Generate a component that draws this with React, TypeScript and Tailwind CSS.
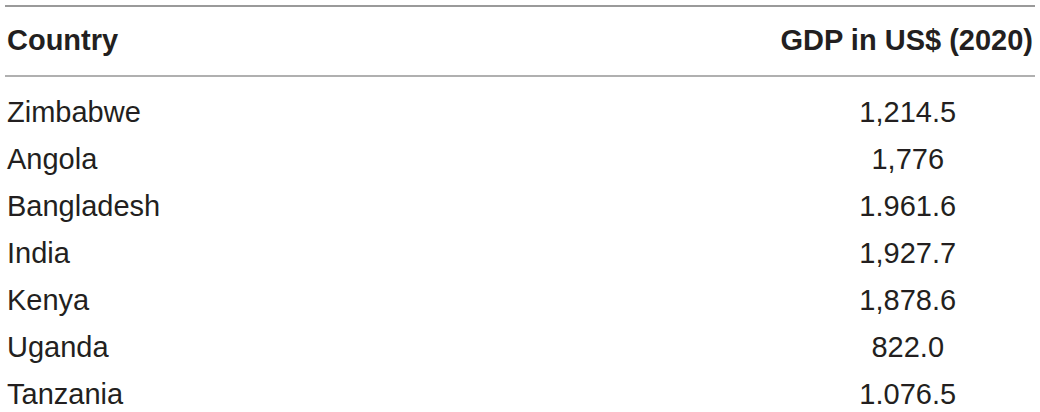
import { Fragment } from "react";

const rows = [
  ["Zimbabwe", "1,214.5"],
  ["Angola", "1,776"],
  ["Bangladesh", "1.961.6"],
  ["India", "1,927.7"],
  ["Kenya", "1,878.6"],
  ["Uganda", "822.0"],
  ["Tanzania", "1.076.5"],
];

const App = () => {
  return (
    <div className="w-[1040px] h-[412px] bg-white px-[5px] pt-[5px] overflow-hidden font-['Liberation_Sans',Arial,sans-serif] text-[29px] text-[#231f20]">
      <div className="grid grid-cols-[1fr_auto] border-t-2 border-[#9a9a9a]">
        <div className="h-[70px] flex items-center font-bold border-b-2 border-[#b0b0b0] pl-[2px]">
          Country
        </div>
        <div className="h-[70px] flex items-center justify-center font-bold border-b-2 border-[#b0b0b0] pr-[2px]">
          GDP in US$ (2020)
        </div>
        <div className="h-[12px]" />
        <div className="h-[12px]" />
        {rows.map(([country, gdp]) => (
          <Fragment key={country}>
            <div className="h-[47px] flex items-center pl-[2px]">{country}</div>
            <div className="h-[47px] flex items-center justify-center">{gdp}</div>
          </Fragment>
        ))}
      </div>
    </div>
  );
};

export default App;
